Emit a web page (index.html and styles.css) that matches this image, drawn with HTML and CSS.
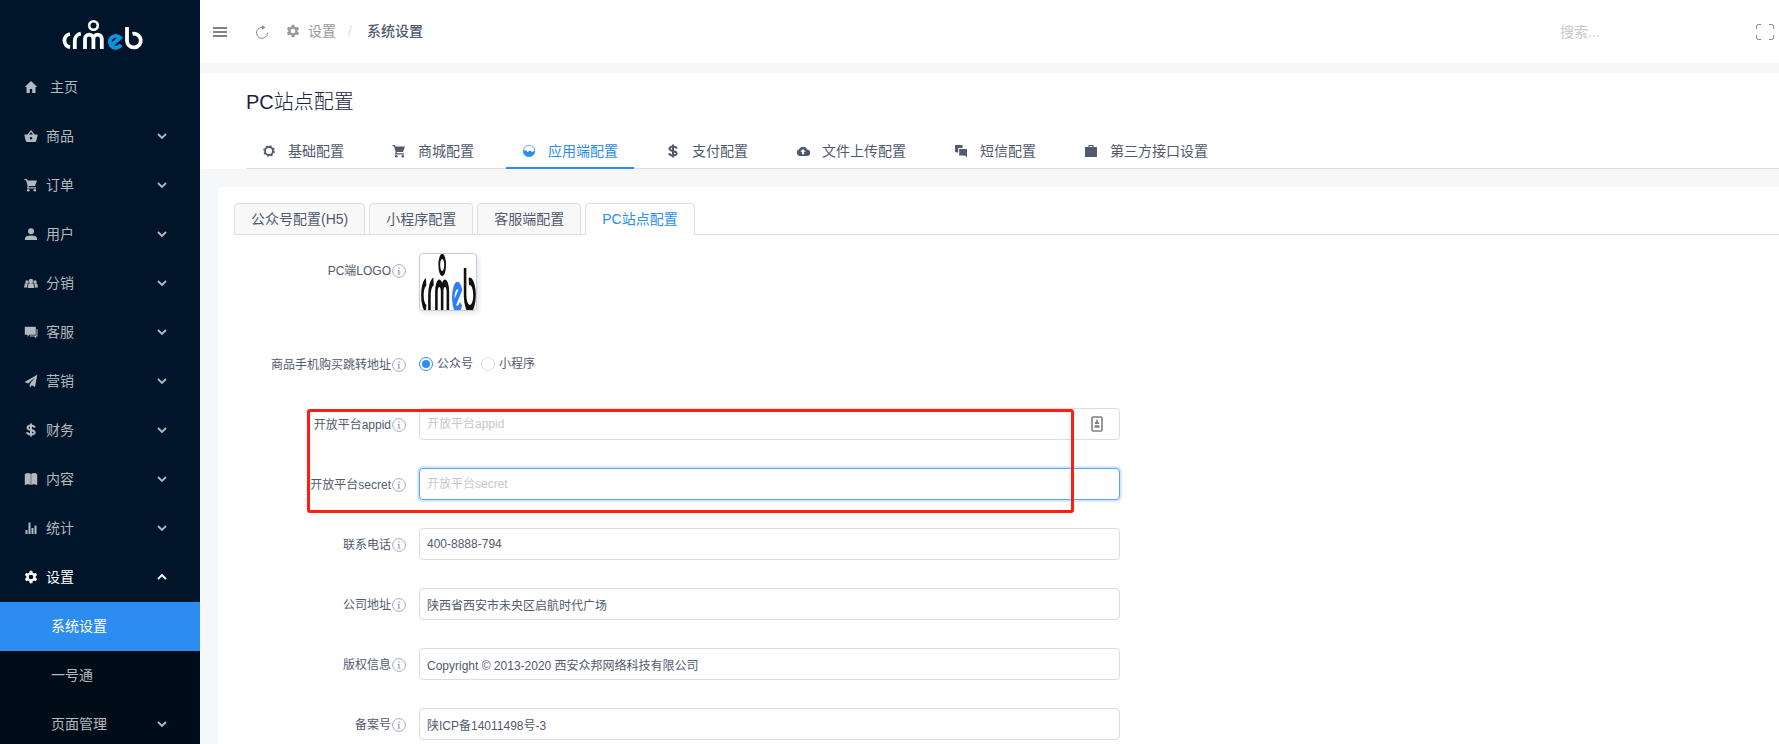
FILE: index.html
```html
<!DOCTYPE html>
<html lang="zh-CN">
<head>
<meta charset="utf-8">
<title>PC站点配置</title>
<link rel="stylesheet" href="styles.css">
</head>
<body>
<svg class="sprite" aria-hidden="true">
  <symbol id="logo" viewBox="0 0 84 32" preserveAspectRatio="none">
    <g fill="none" stroke="currentColor" stroke-width="3.800">
      <path d="M10 16A6.700 6.700 0 0 0 10 29.200M14.800 31V23a7.200 7.200 0 0 1 6-7.300"/>
      <path d="M25 31V20.800a4.200 4.200 0 0 1 8.400 0V31M33.400 20.800a4.200 4.200 0 0 1 8.400 0V31"/>
      <circle cx="33.500" cy="7.500" r="4.300" stroke-width="2.600"/>
      <path d="M67 9v13.500a6.900 6.900 0 1 0 5.500-6.700"/>
      <path class="logo-e" d="M51.500 27L60.300 19.800A6 6 0 1 0 61 26.800"/>
    </g>
  </symbol>
  <symbol id="i-home" viewBox="0 0 14 14"><path d="M7 1L.8 7h1.700v6h3.300V9h2.400v4h3.300V7h1.700z"/></symbol>
  <symbol id="i-basket" viewBox="0 0 14 14"><path fill-rule="evenodd" d="M7 1L3.500 5.500H.5V7l1.300 5q.3 1 1.300 1h7.800q1 0 1.300-1l1.300-5V5.500h-3zM7 3l1.900 2.500H5.100zM7 8a1.300 1.300 0 1 1 0 2.600A1.300 1.300 0 0 1 7 8z"/></symbol>
  <symbol id="i-cart" viewBox="0 0 14 14"><path d="M.5 1h2.400l.7 1.500H13L11 8H5l-.5 1.200H12v1.300H3L3.600 7.700 2 2.300H.5z"/><circle cx="4.300" cy="12.200" r="1.300"/><circle cx="10.800" cy="12.200" r="1.300"/></symbol>
  <symbol id="i-user" viewBox="0 0 14 14"><circle cx="7" cy="4.200" r="3"/><path d="M1 13v-1.500Q1 8.500 7 8.500t6 3V13z"/></symbol>
  <symbol id="i-team" viewBox="0 0 14 14"><circle cx="7" cy="5" r="2.200"/><circle cx="3" cy="6" r="1.700"/><circle cx="11" cy="6" r="1.700"/><path d="M3.700 12L4.500 7.500q2.500-1 5 0l.8 4.500zM0 11.500l.8-4h2.900L3 11.500zM14 11.500l-.8-4h-2.900l.7 4z"/></symbol>
  <symbol id="i-chat" viewBox="0 0 14 14"><path d="M.8 1.800h11v8H5.500l-2 2v-2H.8z"/><path d="M12.500 4h1v7.500h-1.300v2l-2-2H6v-1h6.500z"/></symbol>
  <symbol id="i-plane" viewBox="0 0 14 14"><path d="M13.300.8L.5 8l3.600 1.500 6.500-5.800-4.800 6.500v3.500l2-2.400 3.200 1.700z"/></symbol>
  <symbol id="i-dollar" viewBox="0 0 14 14"><path d="M10.800 4.500Q10 2.600 7 2.600T3.500 4.700Q3.500 6.300 7 7t3.700 2.500Q10.500 11.500 7 11.500T3 9.300M7 .5v13" fill="none" stroke="currentColor" stroke-width="2"/></symbol>
  <symbol id="i-book" viewBox="0 0 14 14"><path d="M.8 2.200Q4-.2 6.800 2v11Q4 11.500.8 13.200zM13.200 2.200Q10-.2 7.200 2v11Q10 11.500 13.200 13.200z"/></symbol>
  <symbol id="i-stats" viewBox="0 0 14 14"><path d="M1.500 9h2v4h-2zM4.500 1.500h2V13h-2zM7.500 7h2v6h-2zM10.500 4.500h2V13h-2z"/></symbol>
  <symbol id="i-gear" viewBox="0 0 14 14"><path fill-rule="evenodd" d="M5.700.8h2.600l.4 1.900 1.300.7 1.800-.6 1.300 2.200-1.400 1.300v1.400l1.400 1.300-1.300 2.200-1.800-.6-1.300.7-.4 1.900H5.700l-.4-1.900L4 10.600l-1.800.6L.9 9l1.400-1.300V6.300L.9 5l1.300-2.200 1.800.6 1.300-.7zM7 4.700a2.300 2.300 0 1 0 0 4.600 2.300 2.300 0 0 0 0-4.600z"/></symbol>
  <symbol id="i-cog" viewBox="0 0 14 14"><circle cx="7" cy="7" r="4" fill="none" stroke="currentColor" stroke-width="1.800"/><circle cx="7" cy="7" r="5.100" fill="none" stroke="currentColor" stroke-width="1.400" stroke-dasharray="2 2.005"/></symbol>
  <symbol id="i-app" viewBox="0 0 14 14"><circle cx="7" cy="7" r="5.700" fill="none" stroke="currentColor" stroke-width=".7"/><path d="M1 7l2.500-1 2 2 2.500-1.500L10 8l3-1.500A6 6 0 0 1 1 7z"/></symbol>
  <symbol id="i-cloud" viewBox="0 0 14 14"><path fill-rule="evenodd" d="M11.200 5.600A4.400 4.400 0 0 0 3 5.300 3.500 3.500 0 0 0 3.500 12h7.400a3.200 3.200 0 0 0 .3-6.400zM7 5l2.700 2.800H8v2.400H6V7.800H4.300z"/></symbol>
  <symbol id="i-sms" viewBox="0 0 14 14"><path d="M1 1h7.500v3H4.200v4.500H3L1 8z"/><path d="M5.200 5H13v8.500L11 11.500H5.200z"/></symbol>
  <symbol id="i-bag" viewBox="0 0 14 14"><path fill-rule="evenodd" d="M4.500 3V1h5v2H13v10H1V3zM5.700 3h2.600v-.9H5.700z"/></symbol>
  <symbol id="i-down" viewBox="0 0 10 10"><path d="M1 3l4 4 4-4" fill="none" stroke="currentColor" stroke-width="1.800"/></symbol>
  <symbol id="i-info" viewBox="0 0 14 14"><circle cx="7" cy="7" r="6.400" fill="none" stroke="currentColor" stroke-width=".8"/><path d="M6.300 3.500h1.300v1.300H6.300zM5.700 6h1.800v3.800h.9v.7H5.600v-.7h.8V6.700h-.7z"/></symbol>
</svg>

<div class="layout">
  <aside class="sidebar">
    <a class="brand" href="#" aria-label="crmeb"><svg class="brand-logo"><use href="#logo"/></svg></a>
    <nav class="menu">
      <a class="menu-item menu-home" href="#"><svg class="icon"><use href="#i-home"/></svg><span>主页</span></a>
      <button class="menu-item" type="button"><svg class="icon"><use href="#i-basket"/></svg><span>商品</span><svg class="arrow"><use href="#i-down"/></svg></button>
      <button class="menu-item" type="button"><svg class="icon"><use href="#i-cart"/></svg><span>订单</span><svg class="arrow"><use href="#i-down"/></svg></button>
      <button class="menu-item" type="button"><svg class="icon"><use href="#i-user"/></svg><span>用户</span><svg class="arrow"><use href="#i-down"/></svg></button>
      <button class="menu-item" type="button"><svg class="icon"><use href="#i-team"/></svg><span>分销</span><svg class="arrow"><use href="#i-down"/></svg></button>
      <button class="menu-item" type="button"><svg class="icon"><use href="#i-chat"/></svg><span>客服</span><svg class="arrow"><use href="#i-down"/></svg></button>
      <button class="menu-item" type="button"><svg class="icon"><use href="#i-plane"/></svg><span>营销</span><svg class="arrow"><use href="#i-down"/></svg></button>
      <button class="menu-item" type="button"><svg class="icon"><use href="#i-dollar"/></svg><span>财务</span><svg class="arrow"><use href="#i-down"/></svg></button>
      <button class="menu-item" type="button"><svg class="icon"><use href="#i-book"/></svg><span>内容</span><svg class="arrow"><use href="#i-down"/></svg></button>
      <button class="menu-item" type="button"><svg class="icon"><use href="#i-stats"/></svg><span>统计</span><svg class="arrow"><use href="#i-down"/></svg></button>
      <button class="menu-item is-open" type="button" aria-expanded="true"><svg class="icon"><use href="#i-gear"/></svg><span>设置</span><svg class="arrow"><use href="#i-down"/></svg></button>
      <div class="submenu">
        <a class="menu-item is-active" href="#"><span>系统设置</span></a>
        <a class="menu-item" href="#"><span>一号通</span></a>
        <button class="menu-item" type="button"><span>页面管理</span><svg class="arrow"><use href="#i-down"/></svg></button>
      </div>
    </nav>
  </aside>

  <div class="page">
    <header class="topbar">
      <button class="tool" type="button" aria-label="菜单"><svg class="icon-bars" viewBox="0 0 14 12" stroke="currentColor" stroke-width="1.500"><path d="M0 2h14M0 6h14M0 10h14"/></svg></button>
      <button class="tool tool-refresh" type="button" aria-label="刷新"><svg class="icon" viewBox="0 0 14 14"><path d="M8.500 2.500A5.500 5.500 0 1 0 12.500 8" fill="none" stroke="currentColor" stroke-width="1"/><path d="M7 .2L10.500 2.500 7 4.500z"/></svg></button>
      <nav class="crumbs">
        <a class="crumb" href="#"><svg class="icon"><use href="#i-gear"/></svg>设置</a>
        <span class="slash">/</span>
        <span class="crumb-now">系统设置</span>
      </nav>
      <input class="search" type="text" placeholder="搜索..." aria-label="搜索">
      <button class="tool" type="button" aria-label="全屏"><svg class="icon-full" viewBox="0 0 18 16" fill="none" stroke="currentColor" stroke-width="1"><path d="M.5 5V2.500q0-2 2-2H5M13 .5h2.500q2 0 2 2V5M17.500 11v2.500q0 2-2 2H13M5 15.500H2.500q-2 0-2-2V11"/></svg></button>
    </header>

    <section class="heading">
      <h1 class="title">PC站点配置</h1>
      <nav class="tabs">
        <a class="tab" href="#"><svg class="icon"><use href="#i-cog"/></svg>基础配置</a>
        <a class="tab" href="#"><svg class="icon"><use href="#i-cart"/></svg>商城配置</a>
        <a class="tab is-active" href="#"><svg class="icon"><use href="#i-app"/></svg>应用端配置</a>
        <a class="tab" href="#"><svg class="icon"><use href="#i-dollar"/></svg>支付配置</a>
        <a class="tab" href="#"><svg class="icon"><use href="#i-cloud"/></svg>文件上传配置</a>
        <a class="tab" href="#"><svg class="icon"><use href="#i-sms"/></svg>短信配置</a>
        <a class="tab" href="#"><svg class="icon"><use href="#i-bag"/></svg>第三方接口设置</a>
      </nav>
    </section>

    <main class="card">
      <nav class="card-tabs">
        <a class="card-tab" href="#">公众号配置(H5)</a>
        <a class="card-tab" href="#">小程序配置</a>
        <a class="card-tab" href="#">客服端配置</a>
        <a class="card-tab is-active" href="#">PC站点配置</a>
      </nav>
      <form class="form">
        <div class="row row-logo">
          <span class="label">PC端LOGO<svg class="icon info"><use href="#i-info"/></svg></span>
          <button class="thumb" type="button" aria-label="PC端LOGO"><svg class="thumb-logo" viewBox="1 2 82 28" preserveAspectRatio="none"><use href="#logo" width="84" height="32"/></svg></button>
        </div>
        <div class="row" role="radiogroup" aria-labelledby="jump">
          <span class="label" id="jump">商品手机购买跳转地址<svg class="icon info"><use href="#i-info"/></svg></span>
          <div class="radios">
            <label class="option"><input class="radio" type="radio" name="jump" checked>公众号</label>
            <label class="option"><input class="radio" type="radio" name="jump">小程序</label>
          </div>
        </div>
        <div class="marked">
          <div class="row">
            <label class="label" for="appid">开放平台appid<svg class="icon info"><use href="#i-info"/></svg></label>
            <div class="field">
              <input class="input" id="appid" type="text" placeholder="开放平台appid">
              <svg class="autofill" viewBox="0 0 12 16"><rect x="1" y="1" width="10" height="14" rx="1" fill="none" stroke="currentColor" stroke-width="1.600"/><path d="M5.300 3.500h1.400v1.700L8 6.500V8H4V6.500l1.300-1.300zM3.500 9.300h5v2.500h-5z"/></svg>
            </div>
          </div>
          <div class="row">
            <label class="label" for="secret">开放平台secret<svg class="icon info"><use href="#i-info"/></svg></label>
            <div class="field"><input class="input is-focus" id="secret" type="text" placeholder="开放平台secret"></div>
          </div>
        </div>
        <div class="row">
          <label class="label" for="phone">联系电话<svg class="icon info"><use href="#i-info"/></svg></label>
          <div class="field"><input class="input" id="phone" type="text" value="400-8888-794"></div>
        </div>
        <div class="row">
          <label class="label" for="address">公司地址<svg class="icon info"><use href="#i-info"/></svg></label>
          <div class="field"><input class="input" id="address" type="text" value="陕西省西安市未央区启航时代广场"></div>
        </div>
        <div class="row">
          <label class="label" for="rights">版权信息<svg class="icon info"><use href="#i-info"/></svg></label>
          <div class="field"><input class="input" id="rights" type="text" value="Copyright © 2013-2020 西安众邦网络科技有限公司"></div>
        </div>
        <div class="row">
          <label class="label" for="icp">备案号<svg class="icon info"><use href="#i-info"/></svg></label>
          <div class="field"><input class="input" id="icp" type="text" value="陕ICP备14011498号-3"></div>
        </div>
      </form>
    </main>
  </div>
</div>
</body>
</html>
```

FILE: styles.css
```css
* { box-sizing: border-box; }

body {
  margin: 0;
  height: 100vh;
  overflow: hidden;
  background: #f5f7f9;
  color: #515a6e;
  font: 14px/20px "Liberation Sans", "Noto Sans CJK SC", sans-serif;
}

a { color: inherit; text-decoration: none; }
button { margin: 0; padding: 0; border: 0; background: none; color: inherit; font: inherit; text-align: left; cursor: pointer; }
svg { display: block; fill: currentColor; }
.sprite { position: absolute; width: 0; height: 0; }
.icon { flex: none; width: 14px; height: 14px; }

.layout { display: flex; height: 100%; }

/* Sidebar */
.sidebar { flex: none; width: 200px; overflow: hidden; background: #001529; color: #b3b9bf; }
.brand { display: flex; justify-content: center; height: 63px; padding: 18px 0 0 4px; color: #fff; }
.brand-logo { width: 84px; height: 32px; }
.logo-e { stroke: var(--logo-accent, #0a94e2); }
.menu-item { display: flex; align-items: center; gap: 8px; width: 100%; height: 49px; padding: 0 33px 2px 24px; }
.menu-home { gap: 12px; }
.arrow { width: 10px; height: 10px; margin-left: auto; }
.is-open { color: #fff; }
.is-open .arrow { transform: rotate(180deg); }
.submenu { background: #000c17; }
.submenu .menu-item { padding-left: 51px; }
.submenu .is-active { background: #2d8cf0; color: #fff; }

/* Top bar */
.page { flex: 1; min-width: 0; display: flex; flex-direction: column; }
.topbar { flex: none; display: flex; align-items: center; height: 63px; padding: 0 5px 0 13px; background: #fff; }
.tool { color: #515a6e; }
.tool-refresh { margin: 0 17px 0 28px; color: #808695; }
.icon-bars { width: 14px; height: 12px; }
.icon-full { width: 18px; height: 16px; color: #808695; fill: none; }
.crumbs { display: flex; align-items: center; flex: 1; padding-bottom: 1px; }
.crumb { display: flex; align-items: center; gap: 8px; color: #999; }
.slash { margin: 0 15px 0 12px; color: #dcdee2; }
.crumb-now { font-weight: 500; }
.search { width: 180px; height: 32px; margin-right: 16px; padding: 0; border: 0; outline: 0; background: none; color: #515a6e; font: inherit; }
.search::placeholder { color: #c5c8ce; opacity: 1; }

/* Page heading */
.heading { flex: none; margin-top: 10px; padding: 15px 0 0 46px; background: #fff; }
.title { margin: 0 0 15px; color: #17233d; font-size: 20px; font-weight: 300; line-height: 28px; }
.tabs { display: flex; gap: 16px; height: 38px; border-bottom: 1px solid #dcdee2; }
.tab { display: flex; align-items: center; gap: 12px; height: 38px; padding: 4px 16px 0; border-bottom: 2px solid transparent; white-space: nowrap; }
.tab.is-active { border-color: #2d8cf0; color: #2d8cf0; }

/* Settings card */
.card { flex: 1; min-height: 0; margin: 18px 0 0 18px; padding: 16px 0 0 16px; border-radius: 4px 0 0 0; background: #fff; overflow: hidden; }
.card-tabs { display: flex; gap: 4px; height: 32px; border-bottom: 1px solid #dcdee2; }
.card-tab { height: 32px; padding: 5px 16px; border: 1px solid #dcdee2; border-radius: 4px 4px 0 0; background: #f8f8f9; white-space: nowrap; }
.card-tab.is-active { border-bottom-color: #fff; background: #fff; color: #2d8cf0; }

.form { padding-top: 18px; font-size: 12px; }
.row { display: flex; gap: 13px; min-height: 32px; margin-bottom: 28px; }
.row-logo { min-height: 67px; }
.label { display: flex; flex: none; align-items: center; justify-content: flex-end; gap: 1px; width: 172px; height: 34px; margin-bottom: -2px; white-space: nowrap; }
.row-logo .label { height: 36px; }
.info { color: #9196a3; }
.field { position: relative; flex: 1; max-width: 701px; }
.input { display: block; width: 100%; height: 32px; padding: 0 7px; border: 1px solid #dcdee2; border-radius: 4px; outline: 0; background: #fff; color: #515a6e; font: inherit; }
.input::placeholder { color: #c5c8ce; opacity: 1; }
.input.is-focus { border-color: #57a3f3; box-shadow: 0 0 0 2px rgba(45, 140, 240, .2); }
.autofill { position: absolute; top: 8px; right: 17px; width: 12px; height: 16px; color: #808080; }

.thumb { --logo-accent: #2d7ff9; width: 58px; height: 58px; border: 1px solid #c0ccda; border-radius: 4px; background: #fff; box-shadow: 2px 2px 5px rgba(0, 0, 0, .1); overflow: hidden; color: #111; }
.thumb-logo { width: 56px; height: 56px; }
.radios { display: flex; align-items: center; gap: 8px; }
.option { display: flex; align-items: center; gap: 4px; }
.radio { display: grid; place-items: center; width: 14px; height: 14px; margin: 0; border: 1px solid #dcdee2; border-radius: 50%; appearance: none; background: #fff; }
.radio:checked { border-color: #2d8cf0; }
.radio:checked::after { content: ""; width: 8px; height: 8px; border-radius: 50%; background: #2d8cf0; }

/* Red frame drawn over the two open-platform rows */
.marked { position: relative; max-width: 886px; }
.marked::after { content: ""; position: absolute; inset: 1px 46px -13px 73px; border: 3px solid #ff1d12; border-radius: 3px; pointer-events: none; }
```
